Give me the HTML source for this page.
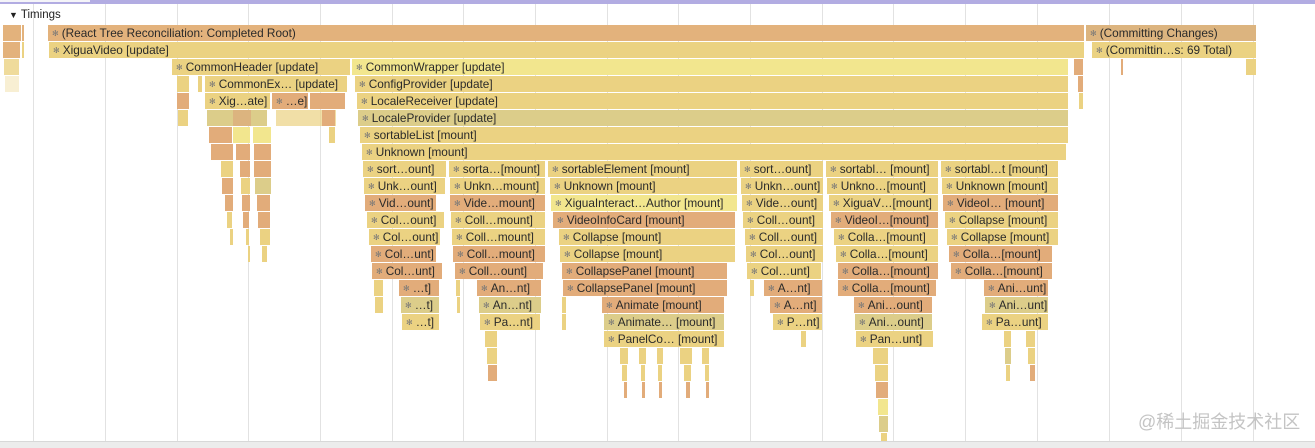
<!DOCTYPE html>
<html><head><meta charset="utf-8"><style>
body{margin:0;width:1315px;height:447px;background:#fff;position:relative;overflow:hidden;font-family:"Liberation Sans",sans-serif}
.g{position:absolute;top:4px;width:1px;height:437px;background:#e2e2e2}
.b{position:absolute;height:16px;font-size:11.8px;line-height:16px;white-space:nowrap;overflow:hidden;color:#2a2a2a;padding-left:4px;box-sizing:border-box}
.b i{font-style:normal;font-size:8px;color:#777;margin-right:3px;vertical-align:1px}
.T{background:#e3b27c}.Y{background:#ebd282}.L{background:#f2e68e}.O{background:#e2ac7a}.D{background:#dccd8a}.C{background:#dcb47f}
.r0{top:25px}.r1{top:42px}.r2{top:59px}.r3{top:76px}.r4{top:93px}.r5{top:110px}.r6{top:127px}.r7{top:144px}.r8{top:161px}.r9{top:178px}.r10{top:195px}.r11{top:212px}.r12{top:229px}.r13{top:246px}.r14{top:263px}.r15{top:280px}.r16{top:297px}.r17{top:314px}.r18{top:331px}.r19{top:348px}.r20{top:365px}.r21{top:382px}.r22{top:399px}.r23{top:416px}.r24{top:433px}
.s{padding:0}
</style></head><body>
<div style="position:absolute;left:0;top:0;width:1315px;height:4px;background:#b2ace2"></div>
<div style="position:absolute;left:0;top:0;width:90px;height:2px;background:#f4f4f8"></div>
<div class="g" style="left:33px"></div><div class="g" style="left:105px"></div><div class="g" style="left:177px"></div><div class="g" style="left:248px"></div><div class="g" style="left:320px"></div><div class="g" style="left:392px"></div><div class="g" style="left:463px"></div><div class="g" style="left:535px"></div><div class="g" style="left:607px"></div><div class="g" style="left:678px"></div><div class="g" style="left:750px"></div><div class="g" style="left:822px"></div><div class="g" style="left:893px"></div><div class="g" style="left:965px"></div><div class="g" style="left:1037px"></div><div class="g" style="left:1109px"></div><div class="g" style="left:1181px"></div><div class="g" style="left:1253px"></div>
<div style="position:absolute;left:9px;top:9px;font-size:11.5px;color:#222"><span style="font-size:9px">▼</span> Timings</div>
<div style="position:absolute;left:0;top:441px;width:1315px;height:6px;background:#ececec;border-top:1px solid #d8d8d8"></div>

<div class="b T s r0" style="left:3px;width:18px"></div><div class="b T s r0" style="left:22px;width:2px"></div>
<div class="b T r0" style="left:48px;width:1036px"><i>✻</i>(React Tree Reconciliation: Completed Root)</div>
<div class="b C r0" style="left:1086px;width:170px"><i>✻</i>(Committing Changes)</div>
<div class="b T s r1" style="left:3px;width:17px"></div><div class="b Y s r1" style="left:22px;width:2px"></div>
<div class="b Y r1" style="left:49px;width:1035px"><i>✻</i>XiguaVideo [update]</div>
<div class="b Y r1" style="left:1092px;width:164px"><i>✻</i>(Committin…s: 69 Total)</div>
<div class="b Y s r2" style="left:4px;width:15px;opacity:.8"></div><div class="b Y s r3" style="left:5px;width:14px;opacity:.35"></div>
<div class="b Y r2" style="left:172px;width:178px"><i>✻</i>CommonHeader [update]</div>
<div class="b L r2" style="left:352px;width:716px"><i>✻</i>CommonWrapper [update]</div>
<div class="b O s r2" style="left:1074px;width:9px"></div><div class="b Y s r2" style="left:1246px;width:10px"></div><div class="b O s r2" style="left:1121px;width:2px"></div>
<div class="b Y r3" style="left:205px;width:142px"><i>✻</i>CommonEx… [update]</div>
<div class="b Y s r3" style="left:177px;width:12px"></div><div class="b Y s r3" style="left:198px;width:4px"></div>
<div class="b Y r3" style="left:355px;width:713px"><i>✻</i>ConfigProvider [update]</div><div class="b O s r3" style="left:1078px;width:5px"></div>
<div class="b Y r4" style="left:205px;width:65px"><i>✻</i>Xig…ate]</div>
<div class="b O r4" style="left:272px;width:36px"><i>✻</i>…e]</div>
<div class="b O s r4" style="left:177px;width:12px"></div><div class="b O s r4" style="left:310px;width:35px"></div>
<div class="b Y r4" style="left:357px;width:711px"><i>✻</i>LocaleReceiver [update]</div><div class="b Y s r4" style="left:1079px;width:4px"></div>
<div class="b D s r5" style="left:207px;width:60px"></div><div class="b C s r5" style="left:233px;width:18px"></div><div class="b Y s r5" style="left:276px;width:60px;opacity:.7"></div><div class="b O s r5" style="left:322px;width:13px"></div><div class="b Y s r5" style="left:178px;width:10px"></div>
<div class="b D r5" style="left:358px;width:710px"><i>✻</i>LocaleProvider [update]</div>
<div class="b O s r6" style="left:209px;width:10px"></div><div class="b O s r6" style="left:218px;width:14px"></div><div class="b L s r6" style="left:233px;width:17px"></div><div class="b L s r6" style="left:253px;width:18px"></div><div class="b Y s r6" style="left:329px;width:6px"></div>
<div class="b Y r6" style="left:360px;width:708px"><i>✻</i>sortableList [mount]</div>
<div class="b O s r7" style="left:211px;width:8px"></div><div class="b O s r7" style="left:219px;width:14px"></div><div class="b O s r7" style="left:236px;width:14px"></div><div class="b O s r7" style="left:254px;width:17px"></div>
<div class="b Y r7" style="left:362px;width:704px"><i>✻</i>Unknown [mount]</div>
<div class="b Y s r8" style="left:221px;width:12px"></div><div class="b O s r8" style="left:240px;width:10px"></div><div class="b O s r8" style="left:254px;width:17px"></div>
<div class="b O s r9" style="left:222px;width:11px"></div><div class="b Y s r9" style="left:241px;width:9px"></div><div class="b D s r9" style="left:255px;width:16px"></div>
<div class="b O s r10" style="left:225px;width:8px"></div><div class="b O s r10" style="left:242px;width:8px"></div><div class="b O s r10" style="left:257px;width:13px"></div>
<div class="b Y s r11" style="left:227px;width:5px"></div><div class="b O s r11" style="left:243px;width:6px"></div><div class="b O s r11" style="left:258px;width:12px"></div>
<div class="b Y s r12" style="left:230px;width:3px"></div><div class="b Y s r12" style="left:246px;width:3px"></div><div class="b Y s r12" style="left:260px;width:10px"></div>
<div class="b Y s r13" style="left:248px;width:2px"></div><div class="b Y s r13" style="left:262px;width:5px"></div>

<!-- col1 -->
<div class="b Y r8" style="left:363px;width:83px"><i>✻</i>sort…ount]</div>
<div class="b Y r9" style="left:364px;width:81px"><i>✻</i>Unk…ount]</div>
<div class="b O r10" style="left:365px;width:71px"><i>✻</i>Vid…ount]</div>
<div class="b Y r11" style="left:367px;width:77px"><i>✻</i>Col…ount]</div>
<div class="b Y r12" style="left:369px;width:71px"><i>✻</i>Col…ount]</div>
<div class="b O r13" style="left:371px;width:65px"><i>✻</i>Col…unt]</div>
<div class="b O r14" style="left:372px;width:70px"><i>✻</i>Col…unt]</div>
<div class="b Y s r15" style="left:374px;width:9px"></div><div class="b O r15" style="left:399px;width:40px"><i>✻</i>…t]</div>
<div class="b Y s r16" style="left:375px;width:8px"></div><div class="b D r16" style="left:401px;width:38px"><i>✻</i>…t]</div>
<div class="b Y r17" style="left:402px;width:37px"><i>✻</i>…t]</div>
<!-- col2 -->
<div class="b Y r8" style="left:449px;width:96px"><i>✻</i>sorta…[mount]</div>
<div class="b Y r9" style="left:450px;width:95px"><i>✻</i>Unkn…mount]</div>
<div class="b O r10" style="left:450px;width:95px"><i>✻</i>Vide…mount]</div>
<div class="b Y r11" style="left:451px;width:94px"><i>✻</i>Coll…mount]</div>
<div class="b Y r12" style="left:452px;width:93px"><i>✻</i>Coll…mount]</div>
<div class="b O r13" style="left:453px;width:92px"><i>✻</i>Coll…mount]</div>
<div class="b O r14" style="left:455px;width:88px"><i>✻</i>Coll…ount]</div>
<div class="b Y s r15" style="left:456px;width:4px"></div><div class="b O r15" style="left:477px;width:64px"><i>✻</i>An…nt]</div>
<div class="b Y s r16" style="left:457px;width:3px"></div><div class="b D r16" style="left:479px;width:62px"><i>✻</i>An…nt]</div>
<div class="b Y r17" style="left:480px;width:60px"><i>✻</i>Pa…nt]</div>
<div class="b Y s r18" style="left:485px;width:12px"></div><div class="b Y s r19" style="left:487px;width:10px"></div><div class="b O s r20" style="left:488px;width:9px"></div>
<div class="b Y s r17" style="left:562px;width:4px"></div><div class="b Y s r16" style="left:562px;width:4px"></div>
<!-- col3 -->
<div class="b Y r8" style="left:548px;width:189px"><i>✻</i>sortableElement [mount]</div>
<div class="b Y r9" style="left:550px;width:187px"><i>✻</i>Unknown [mount]</div>
<div class="b L r10" style="left:551px;width:186px"><i>✻</i>XiguaInteract…Author [mount]</div>
<div class="b O r11" style="left:553px;width:182px"><i>✻</i>VideoInfoCard [mount]</div>
<div class="b Y r12" style="left:559px;width:176px"><i>✻</i>Collapse [mount]</div>
<div class="b Y r13" style="left:560px;width:175px"><i>✻</i>Collapse [mount]</div>
<div class="b O r14" style="left:562px;width:165px"><i>✻</i>CollapsePanel [mount]</div>
<div class="b O r15" style="left:563px;width:164px"><i>✻</i>CollapsePanel [mount]</div>
<div class="b O r16" style="left:602px;width:122px"><i>✻</i>Animate [mount]</div>
<div class="b D r17" style="left:604px;width:120px"><i>✻</i>Animate… [mount]</div>
<div class="b Y r18" style="left:604px;width:120px"><i>✻</i>PanelCo… [mount]</div>
<div class="b Y s r19" style="left:620px;width:8px"></div><div class="b Y s r19" style="left:639px;width:7px"></div><div class="b Y s r19" style="left:657px;width:6px"></div><div class="b Y s r19" style="left:680px;width:12px"></div><div class="b Y s r19" style="left:702px;width:7px"></div>
<div class="b Y s r20" style="left:622px;width:5px"></div><div class="b Y s r20" style="left:641px;width:4px"></div><div class="b Y s r20" style="left:658px;width:4px"></div><div class="b Y s r20" style="left:684px;width:7px"></div><div class="b Y s r20" style="left:705px;width:4px"></div>
<div class="b O s r21" style="left:624px;width:3px"></div><div class="b O s r21" style="left:642px;width:3px"></div><div class="b O s r21" style="left:659px;width:3px"></div><div class="b O s r21" style="left:686px;width:4px"></div><div class="b O s r21" style="left:706px;width:3px"></div>
<!-- col4 -->
<div class="b Y r8" style="left:740px;width:83px"><i>✻</i>sort…ount]</div>
<div class="b Y r9" style="left:741px;width:82px"><i>✻</i>Unkn…ount]</div>
<div class="b Y r10" style="left:742px;width:81px"><i>✻</i>Vide…ount]</div>
<div class="b Y r11" style="left:743px;width:80px"><i>✻</i>Coll…ount]</div>
<div class="b Y r12" style="left:745px;width:78px"><i>✻</i>Coll…ount]</div>
<div class="b Y r13" style="left:746px;width:77px"><i>✻</i>Col…ount]</div>
<div class="b Y r14" style="left:747px;width:74px"><i>✻</i>Col…unt]</div>
<div class="b Y s r15" style="left:750px;width:4px"></div><div class="b O r15" style="left:764px;width:58px"><i>✻</i>A…nt]</div>
<div class="b O r16" style="left:770px;width:52px"><i>✻</i>A…nt]</div>
<div class="b Y r17" style="left:773px;width:49px"><i>✻</i>P…nt]</div>
<div class="b Y s r18" style="left:801px;width:5px"></div>
<!-- col5 -->
<div class="b Y r8" style="left:826px;width:112px"><i>✻</i>sortabl… [mount]</div>
<div class="b Y r9" style="left:827px;width:111px"><i>✻</i>Unkno…[mount]</div>
<div class="b Y r10" style="left:829px;width:109px"><i>✻</i>XiguaV…[mount]</div>
<div class="b O r11" style="left:831px;width:107px"><i>✻</i>VideoI…[mount]</div>
<div class="b Y r12" style="left:834px;width:104px"><i>✻</i>Colla…[mount]</div>
<div class="b Y r13" style="left:836px;width:102px"><i>✻</i>Colla…[mount]</div>
<div class="b O r14" style="left:838px;width:100px"><i>✻</i>Colla…[mount]</div>
<div class="b O r15" style="left:838px;width:98px"><i>✻</i>Colla…[mount]</div>
<div class="b O r16" style="left:854px;width:78px"><i>✻</i>Ani…ount]</div>
<div class="b D r17" style="left:855px;width:77px"><i>✻</i>Ani…ount]</div>
<div class="b Y r18" style="left:856px;width:77px"><i>✻</i>Pan…unt]</div>
<div class="b Y s r19" style="left:873px;width:15px"></div><div class="b Y s r20" style="left:875px;width:13px"></div><div class="b O s r21" style="left:876px;width:12px"></div><div class="b L s r22" style="left:878px;width:10px"></div><div class="b D s r23" style="left:879px;width:9px"></div><div class="b Y s r24" style="left:881px;width:6px;height:8px"></div>
<!-- col6 -->
<div class="b Y r8" style="left:941px;width:117px"><i>✻</i>sortabl…t [mount]</div>
<div class="b Y r9" style="left:942px;width:116px"><i>✻</i>Unknown [mount]</div>
<div class="b O r10" style="left:943px;width:115px"><i>✻</i>VideoI… [mount]</div>
<div class="b Y r11" style="left:945px;width:113px"><i>✻</i>Collapse [mount]</div>
<div class="b Y r12" style="left:947px;width:111px"><i>✻</i>Collapse [mount]</div>
<div class="b O r13" style="left:949px;width:103px"><i>✻</i>Colla…[mount]</div>
<div class="b O r14" style="left:951px;width:101px"><i>✻</i>Colla…[mount]</div>
<div class="b O r15" style="left:984px;width:64px"><i>✻</i>Ani…unt]</div>
<div class="b D r16" style="left:985px;width:63px"><i>✻</i>Ani…unt]</div>
<div class="b Y r17" style="left:982px;width:66px"><i>✻</i>Pa…unt]</div>
<div class="b Y s r18" style="left:1004px;width:7px"></div><div class="b Y s r18" style="left:1026px;width:9px"></div>
<div class="b D s r19" style="left:1005px;width:6px"></div><div class="b Y s r19" style="left:1028px;width:7px"></div>
<div class="b Y s r20" style="left:1006px;width:4px"></div><div class="b O s r20" style="left:1030px;width:5px"></div>

<div style="position:absolute;left:1138px;top:408px;font-size:18px;color:#c4c4c4;font-family:'Liberation Sans','Noto Sans CJK SC',sans-serif">@稀土掘金技术社区</div>
</body></html>
